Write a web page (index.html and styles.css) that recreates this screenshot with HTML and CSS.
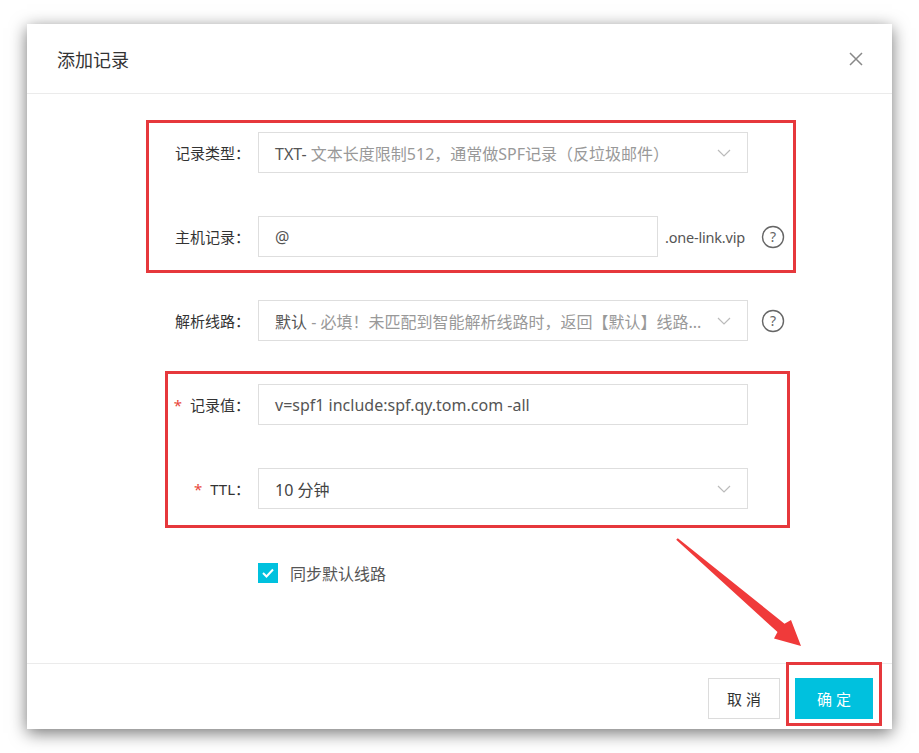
FILE: index.html
```html
<!DOCTYPE html>
<html lang="zh-CN">
<head>
    <meta charset="UTF-8">
    <title>添加记录</title>
    <link rel="stylesheet" href="styles.css">
</head>
<body>
    <div class="dialog">
        <div class="dialog-header">
            <h2>添加记录</h2>
            <svg class="close" width="14" height="14" viewBox="0 0 14 14">
                <path d="M1 1 L13 13 M13 1 L1 13" stroke="#888" stroke-width="1.5" fill="none"/>
            </svg>
        </div>

        <div class="dialog-body">
            <!-- 记录类型 -->
            <div class="form-row">
                <label class="form-label">记录类型：</label>
                <div class="field select">
                    <span class="val"><span class="strong">TXT-</span> 文本长度限制512，通常做SPF记录（反垃圾邮件）</span>
                    <svg class="chevron" width="14" height="8" viewBox="0 0 14 8"><path d="M1 1 L7 7 L13 1" stroke="#bbb" stroke-width="1.2" fill="none"/></svg>
                </div>
            </div>

            <!-- 主机记录 -->
            <div class="form-row">
                <label class="form-label">主机记录：</label>
                <div class="host">
                    <div class="field host-input"><span class="val strong">@</span></div>
                    <span class="suffix">.one-link.vip</span>
                </div>
                <svg class="help" width="24" height="24" viewBox="0 0 24 24">
                    <circle cx="12" cy="12" r="10.5" stroke="#666" stroke-width="1.4" fill="none"/>
                    <text x="12" y="17" text-anchor="middle" font-size="14" fill="#666" font-family="Noto Sans, sans-serif">?</text>
                </svg>
            </div>

            <!-- 解析线路 -->
            <div class="form-row">
                <label class="form-label">解析线路：</label>
                <div class="field select">
                    <span class="val"><span class="strong">默认</span> - 必填！未匹配到智能解析线路时，返回【默认】线路...</span>
                    <svg class="chevron" width="14" height="8" viewBox="0 0 14 8"><path d="M1 1 L7 7 L13 1" stroke="#bbb" stroke-width="1.2" fill="none"/></svg>
                </div>
                <svg class="help" width="24" height="24" viewBox="0 0 24 24">
                    <circle cx="12" cy="12" r="10.5" stroke="#666" stroke-width="1.4" fill="none"/>
                    <text x="12" y="17" text-anchor="middle" font-size="14" fill="#666" font-family="Noto Sans, sans-serif">?</text>
                </svg>
            </div>

            <!-- 记录值 -->
            <div class="form-row">
                <label class="form-label"><span class="req">*</span>记录值：</label>
                <div class="field"><span class="val strong">v=spf1 include:spf.qy.tom.com -all</span></div>
            </div>

            <!-- TTL -->
            <div class="form-row">
                <label class="form-label"><span class="req">*</span>TTL：</label>
                <div class="field select">
                    <span class="val dark">10 分钟</span>
                    <svg class="chevron" width="14" height="8" viewBox="0 0 14 8"><path d="M1 1 L7 7 L13 1" stroke="#bbb" stroke-width="1.2" fill="none"/></svg>
                </div>
            </div>

            <div class="form-row">
                <span></span>
                <label class="check">
                    <span class="box">
                        <svg width="12" height="10" viewBox="0 0 12 10"><path d="M1 5 L4.5 8.5 L11 1.5" stroke="#fff" stroke-width="2" fill="none"/></svg>
                    </span>
                    同步默认线路
                </label>
            </div>
        </div>

        <div class="dialog-footer">
            <button class="btn">取 消</button>
            <button class="btn btn-primary">确 定</button>
        </div>
    </div>

    <!-- 标注 -->
    <div class="mark mark-host"></div>
    <div class="mark mark-value"></div>
    <div class="mark mark-ok"></div>
    <svg class="arrow" width="919" height="753" viewBox="0 0 919 753">
        <polygon points="677.8,538.2 784.5,623.8 791,620 801,646 774,638.5 777.5,632 676.2,539.8" fill="#f03a3a"/>
    </svg>
</body>
</html>
```

FILE: styles.css
```css
body {
    margin: 0;
    font-family: "Noto Sans", "Noto Sans CJK SC", sans-serif;
    background-color: #fff;
    position: relative;
    height: 753px;
    overflow: hidden;
}

.dialog {
    margin: 24px 0 0 27px;
    width: 865px;
    height: 705px;
    background-color: #fff;
    box-shadow: 0 4px 16px rgba(0, 0, 0, 0.55);
    display: flex;
    flex-direction: column;
}

.dialog-header {
    height: 69px;
    border-bottom: 1px solid #ebebeb;
    display: flex;
    align-items: center;
    justify-content: space-between;
    padding: 0 29px 0 30px;
}

.dialog-header h2 {
    margin: 0;
    font-size: 18px;
    font-weight: normal;
    color: #333;
}

.dialog-body {
    flex: 1;
    padding-top: 38px;
}

.form-row {
    display: grid;
    grid-template-columns: 231px 490px auto;
    align-items: center;
    height: 41px;
    margin-bottom: 43px;
}

.form-label {
    text-align: right;
    padding-right: 8px;
    font-size: 15px;
    color: #333;
}

.req {
    color: #e8483c;
    margin-right: 8px;
}

.field {
    height: 41px;
    box-sizing: border-box;
    border: 1px solid #dedede;
    padding: 0 16px;
    display: flex;
    align-items: center;
    justify-content: space-between;
    font-size: 16px;
    color: #999;
    white-space: nowrap;
}

.field .strong {
    color: #555;
}

.field .dark {
    color: #444;
}

.chevron {
    flex: none;
}

.host {
    display: flex;
    align-items: center;
}

.host-input {
    width: 400px;
    flex: none;
}

.suffix {
    margin-left: 7px;
    font-size: 14.5px;
    color: #555;
    white-space: nowrap;
    letter-spacing: -0.2px;
}

.help {
    margin-left: 13px;
}

.check {
    display: flex;
    align-items: center;
    font-size: 16px;
    color: #555;
}

.check .box {
    width: 20px;
    height: 20px;
    background-color: #00c1de;
    display: flex;
    align-items: center;
    justify-content: center;
    margin-right: 12px;
}

.dialog-footer {
    height: 66px;
    border-top: 1px solid #ebebeb;
    display: flex;
    justify-content: flex-end;
    align-items: flex-start;
    gap: 15px;
    padding: 14px 19px 0 0;
    box-sizing: border-box;
}

.btn {
    height: 41px;
    width: 72px;
    border: 1px solid #dcdcdc;
    background-color: #fff;
    color: #333;
    font-family: inherit;
    font-size: 15px;
    padding: 0;
}

.btn-primary {
    width: 78px;
    border-color: #00c1de;
    background-color: #00c1de;
    color: #fff;
}

/* 红色标注 */
.mark {
    position: absolute;
    border: 3px solid #e6383c;
    box-sizing: border-box;
}

.mark-host {
    left: 146px;
    top: 120px;
    width: 650px;
    height: 153px;
}

.mark-value {
    left: 165px;
    top: 371px;
    width: 625px;
    height: 157px;
}

.mark-ok {
    left: 786px;
    top: 662px;
    width: 96px;
    height: 64px;
}

.arrow {
    position: absolute;
    left: 0;
    top: 0;
}
```
